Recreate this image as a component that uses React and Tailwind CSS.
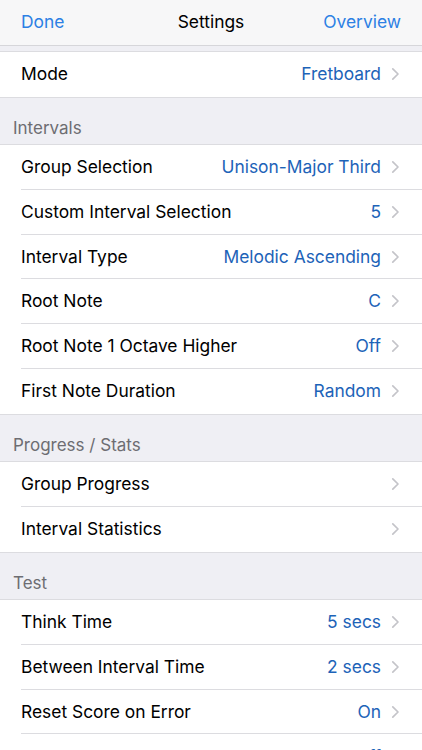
import React from "react";

const Chevron = () => (
  <svg width="9" height="14" viewBox="0 0 9 14" className="ml-[10px] shrink-0">
    <path d="M1.8 1.8 L7 7 L1.8 12.2" fill="none" stroke="#c4c4c9" strokeWidth="1.7" strokeLinecap="round" strokeLinejoin="round" />
  </svg>
);

const Row = ({ label, value, last }) => (
  <div className="flex h-[44.8px] items-stretch pl-[21px]">
    <div className={`flex flex-1 items-center pr-[22px] ${last ? "" : "border-b border-[#dcdce0]"}`}>
      <span className="flex-1 text-[17.4px] text-black">{label}</span>
      {value && <span className="text-[17.4px] text-[#1d63b8]">{value}</span>}
      <Chevron />
    </div>
  </div>
);

const Group = ({ rows }) => (
  <div className="border-y border-[#dcdce0] bg-white">
    {rows.map((r, i) => (
      <Row key={r[0]} label={r[0]} value={r[1]} last={i === rows.length - 1} />
    ))}
  </div>
);

const Header = ({ children }) => (
  <div className="flex h-[46.3px] items-end pb-[3px] pl-[13px] text-[17px] text-[#6d6d72]">{children}</div>
);

export default function App() {
  return (
    <div className="h-[750px] w-[422px] overflow-hidden bg-[#efeff4]" style={{ fontFamily: "Inter, 'Liberation Sans', sans-serif" }}>
      <div className="grid h-[46px] grid-cols-3 items-center border-b border-[#d6d6da] bg-[#f7f7f8] px-[21px] text-[17.4px]">
        <span className="text-[#2c80e4]">Done</span>
        <span className="text-center text-black">Settings</span>
        <span className="text-right text-[#2c80e4]">Overview</span>
      </div>
      <div className="h-[5px]" />
      <Group rows={[["Mode", "Fretboard"]]} />
      <Header>Intervals</Header>
      <Group
        rows={[
          ["Group Selection", "Unison-Major Third"],
          ["Custom Interval Selection", "5"],
          ["Interval Type", "Melodic Ascending"],
          ["Root Note", "C"],
          ["Root Note 1 Octave Higher", "Off"],
          ["First Note Duration", "Random"],
        ]}
      />
      <Header>Progress / Stats</Header>
      <Group rows={[["Group Progress", ""], ["Interval Statistics", ""]]} />
      <Header>Test</Header>
      <Group
        rows={[
          ["Think Time", "5 secs"],
          ["Between Interval Time", "2 secs"],
          ["Reset Score on Error", "On"],
          ["Auto Advance", "Off"],
        ]}
      />
    </div>
  );
}
